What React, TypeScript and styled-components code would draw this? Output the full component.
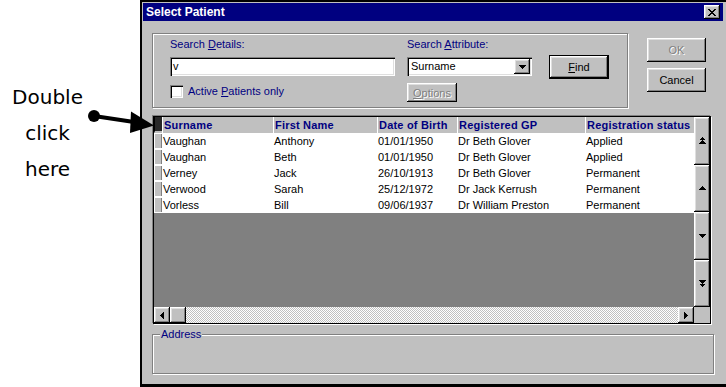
import * as React from 'react';
import styled, { createGlobalStyle } from 'styled-components';

const GlobalStyle = createGlobalStyle`
  html, body {
    margin: 0;
    padding: 0;
    background: #fff;
  }
  body {
    font-family: "Liberation Sans", Arial, sans-serif;
    font-size: 11px;
    color: #000;
  }
`;

const Page = styled.div`
  position: relative;
  display: flex;
  width: 726px;
  height: 387px;
  overflow: hidden;
`;

const Note = styled.div`
  flex: none;
  width: 140px;
  box-sizing: border-box;
  padding: 79px 45px 0 0;
  font-family: "DejaVu Sans", sans-serif;
  font-size: 20px;
  line-height: 36px;
  text-align: center;
`;

const Arrow = styled.svg`
  position: absolute;
  left: 0;
  top: 0;
  pointer-events: none;
`;

const Window = styled.div`
  flex: 1;
  box-sizing: border-box;
  height: 387px;
  display: flex;
  flex-direction: column;
  background: #c0c0c0;
  border: 2px solid #000;
  border-right: none;
  border-bottom-width: 3px;
  padding: 1px 3px 0 1px;
`;

const TitleBar = styled.div`
  height: 18px;
  flex: none;
  display: flex;
  align-items: center;
  justify-content: space-between;
  padding: 0 3px;
  background: #000080;
  color: #fff;
  font-weight: bold;
  font-size: 12px;
`;

const raised = `
  background: #c0c0c0;
  box-shadow: inset -1px -1px #000, inset 1px 1px #fff,
    inset -2px -2px #808080, inset 2px 2px #dfdfdf;
`;

const sunken = `
  background: #fff;
  box-shadow: inset 1px 1px #808080, inset 2px 2px #000,
    inset -1px -1px #fff, inset -2px -2px #dfdfdf;
`;

const CloseButton = styled.div`
  ${raised}
  width: 16px;
  height: 14px;
  display: flex;
  align-items: center;
  justify-content: center;
`;

const TopRow = styled.div`
  display: flex;
  align-items: flex-start;
  margin: 12px 0 0 9px;
`;

const Group = styled.div`
  box-sizing: border-box;
  width: 476px;
  height: 75px;
  display: flex;
  padding: 4px 0 0 17px;
  border: 1px solid #808080;
  box-shadow: inset 1px 1px #fff, 1px 1px #fff;
`;

const Column = styled.div<{ $width: number; $gap?: number }>`
  width: ${(p) => p.$width}px;
  margin-left: ${(p) => p.$gap ?? 0}px;
  display: flex;
  flex-direction: column;
  align-items: flex-start;
`;

const Label = styled.div`
  height: 19px;
  line-height: 13px;
  color: #000080;
  white-space: nowrap;
`;

const Field = styled.div`
  ${sunken}
  box-sizing: border-box;
  width: 100%;
  height: 19px;
  line-height: 19px;
  padding-left: 3px;
`;

const Select = styled(Field)`
  display: flex;
  justify-content: space-between;
  padding: 2px 2px 2px 4px;
  line-height: 15px;
`;

const DropButton = styled.div`
  ${raised}
  width: 16px;
  height: 15px;
  display: flex;
  align-items: center;
  justify-content: center;
`;

const CheckRow = styled.div`
  display: flex;
  align-items: center;
  gap: 5px;
  margin-top: 9px;
  color: #000080;
  line-height: 13px;
`;

const CheckBox = styled.div`
  ${sunken}
  width: 13px;
  height: 13px;
`;

const Button = styled.div<{ $w: number; $h: number; $disabled?: boolean; $default?: boolean; $top?: number }>`
  ${raised}
  box-sizing: border-box;
  width: ${(p) => p.$w}px;
  height: ${(p) => p.$h}px;
  margin-top: ${(p) => p.$top ?? 0}px;
  display: flex;
  align-items: center;
  justify-content: center;
  color: ${(p) => (p.$disabled ? '#808080' : '#000')};
  text-shadow: ${(p) => (p.$disabled ? '1px 1px 0 #fff' : 'none')};
  border: ${(p) => (p.$default ? '1px solid #000' : 'none')};
`;

const SideButtons = styled.div`
  display: flex;
  flex-direction: column;
  gap: 6px;
  margin: 5px 0 0 19px;
`;

const Grid = styled.div`
  box-sizing: border-box;
  width: 558px;
  height: 208px;
  margin: 8px 0 0 10px;
  border: 1px solid #000;
  box-shadow: -1px -1px 0 #808080, 1px 1px 0 #fff;
  display: grid;
  grid-template-columns: 540px 16px;
  grid-template-rows: 190px 16px;
`;

const Table = styled.div`
  background: #808080;
  overflow: hidden;
`;

const columns = '8px 111px 104px 80px 128px 109px';

const Row = styled.div`
  display: grid;
  grid-template-columns: ${columns};
  height: 16px;
  line-height: 16px;
  background: #fff;
  white-space: nowrap;
`;

const HeadCell = styled.div`
  background: #c0c0c0;
  border-left: 1px solid #fff;
  padding-left: 1px;
  color: #000080;
  font-weight: bold;
  letter-spacing: 0.2px;
  overflow: hidden;
`;

const Cell = styled.div`
  padding-left: 1px;
  overflow: hidden;
`;

const HeadSelector = styled.div`
  background: #282828;
  border-left: 1px solid #000;
  border-bottom: 2px solid #c0c0c0;
`;

const Selector = styled.div`
  margin: 1px 0 1px 1px;
  background: #c0c0c0;
  border-right: 1px solid #808080;
`;

const VScroll = styled.div`
  display: flex;
  flex-direction: column;
`;

const ScrollButton = styled.div<{ $size?: number }>`
  ${raised}
  flex: ${(p) => (p.$size ? 'none' : 1)};
  width: ${(p) => (p.$size ? `${p.$size}px` : 'auto')};
  height: ${(p) => (p.$size ? `${p.$size}px` : 'auto')};
  display: flex;
  align-items: center;
  justify-content: center;
`;

const HScroll = styled.div`
  display: flex;
`;

const Track = styled.div`
  flex: 1;
  background: repeating-conic-gradient(#c0c0c0 0% 25%, #fff 0% 50%) 0 0 / 2px 2px;
`;

const Corner = styled.div`
  background: #c0c0c0;
`;

const AddressBox = styled.div`
  box-sizing: border-box;
  width: 562px;
  height: 40px;
  margin: 10px 0 0 9px;
  border: 1px solid #808080;
  box-shadow: inset 1px 1px #fff, 1px 1px #fff;
  display: flex;
  align-items: flex-start;
`;

const Caption = styled.div`
  margin: -7px 0 0 7px;
  padding: 0 1px;
  line-height: 13px;
  background: #c0c0c0;
  color: #000080;
`;

type Pix = { d: string; w: number; h: number };

const Glyph = ({ d, w, h }: Pix) => (
  <svg width={w} height={h} viewBox={`0 0 ${w} ${h}`} shapeRendering="crispEdges">
    <path d={d} fill="#000" />
  </svg>
);

const closeX = 'M0 0h2v1H0zM6 0h2v1H6zM1 1h2v1H1zM5 1h2v1H5zM2 2h4v1H2zM3 3h2v1H3zM2 4h4v1H2zM1 5h2v1H1zM5 5h2v1H5zM0 6h2v1H0zM6 6h2v1H6z';
const down = 'M0 0h7v1H0zM1 1h5v1H1zM2 2h3v1H2zM3 3h1v1H3z';
const up = 'M3 0h1v1H3zM2 1h3v1H2zM1 2h5v1H1zM0 3h7v1H0z';
const upUp = 'M3 0h1v1H3zM2 1h3v1H2zM1 2h5v1H1zM3 3h1v1H3zM2 4h3v1H2zM1 5h5v1H1zM0 6h7v1H0z';
const downDown = 'M0 0h7v1H0zM1 1h5v1H1zM2 2h3v1H2zM3 3h1v1H3zM1 4h5v1H1zM2 5h3v1H2zM3 6h1v1H3z';
const left = 'M3 0h1v7H3zM2 1h1v5H2zM1 2h1v3H1zM0 3h1v1H0z';
const right = 'M0 0h1v7H0zM1 1h1v5H1zM2 2h1v3H2zM3 3h1v1H3z';

const patients = [
  ['Vaughan', 'Anthony', '01/01/1950', 'Dr Beth Glover', 'Applied'],
  ['Vaughan', 'Beth', '01/01/1950', 'Dr Beth Glover', 'Applied'],
  ['Verney', 'Jack', '26/10/1913', 'Dr Beth Glover', 'Permanent'],
  ['Verwood', 'Sarah', '25/12/1972', 'Dr Jack Kerrush', 'Permanent'],
  ['Vorless', 'Bill', '09/06/1937', 'Dr William Preston', 'Permanent'],
];

const headings = ['Surname', 'First Name', 'Date of Birth', 'Registered GP', 'Registration status'];

export default function App(): JSX.Element {
  return (
    <Page>
      <GlobalStyle />
      <Note>
        Double
        <br />
        click
        <br />
        here
      </Note>
      <Window>
        <TitleBar>
          <span>Select Patient</span>
          <CloseButton>
            <Glyph d={closeX} w={8} h={7} />
          </CloseButton>
        </TitleBar>
        <TopRow>
          <Group>
            <Column $width={225}>
              <Label>
                Search <u>D</u>etails:
              </Label>
              <Field>v</Field>
              <CheckRow>
                <CheckBox />
                <span>
                  Active <u>P</u>atients only
                </span>
              </CheckRow>
            </Column>
            <Column $width={125} $gap={12}>
              <Label>
                Search <u>A</u>ttribute:
              </Label>
              <Select>
                <span>Surname</span>
                <DropButton>
                  <Glyph d={down} w={7} h={4} />
                </DropButton>
              </Select>
              <Button $w={50} $h={19} $top={7} $disabled>
                <span>
                  <u>O</u>ptions
                </span>
              </Button>
            </Column>
            <Column $width={60} $gap={17}>
              <Button $w={60} $h={24} $top={17} $default>
                <span>
                  <u>F</u>ind
                </span>
              </Button>
            </Column>
          </Group>
          <SideButtons>
            <Button $w={59} $h={24} $disabled>
              OK
            </Button>
            <Button $w={59} $h={24}>
              Cancel
            </Button>
          </SideButtons>
        </TopRow>
        <Grid>
          <Table>
            <Row>
              <HeadSelector />
              {headings.map((h) => (
                <HeadCell key={h}>{h}</HeadCell>
              ))}
            </Row>
            {patients.map((p, i) => (
              <Row key={i}>
                <Selector />
                {p.map((v, j) => (
                  <Cell key={j}>{v}</Cell>
                ))}
              </Row>
            ))}
          </Table>
          <VScroll>
            <ScrollButton>
              <Glyph d={upUp} w={7} h={7} />
            </ScrollButton>
            <ScrollButton>
              <Glyph d={up} w={7} h={4} />
            </ScrollButton>
            <ScrollButton>
              <Glyph d={down} w={7} h={4} />
            </ScrollButton>
            <ScrollButton>
              <Glyph d={downDown} w={7} h={7} />
            </ScrollButton>
          </VScroll>
          <HScroll>
            <ScrollButton $size={16}>
              <Glyph d={left} w={4} h={7} />
            </ScrollButton>
            <ScrollButton $size={16} />
            <Track />
            <ScrollButton $size={16}>
              <Glyph d={right} w={4} h={7} />
            </ScrollButton>
          </HScroll>
          <Corner />
        </Grid>
        <AddressBox>
          <Caption>Address</Caption>
        </AddressBox>
      </Window>
      <Arrow width={160} height={140} viewBox="0 0 160 140">
        <circle cx={94} cy={116} r={6} fill="#000" />
        <path d="M94 116 L134 122" stroke="#000" strokeWidth={4} />
        <path d="M131 111.5 L154 125.5 L130 133 Z" fill="#000" />
      </Arrow>
    </Page>
  );
}
